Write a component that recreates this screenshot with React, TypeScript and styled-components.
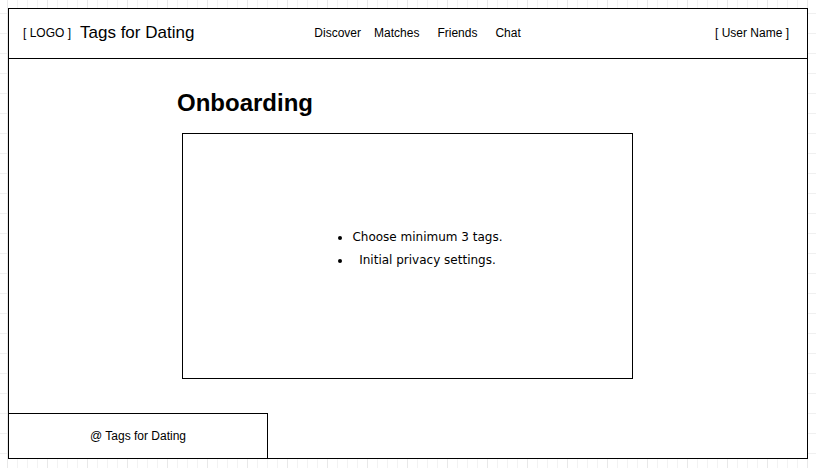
import React from "react";
import styled, { createGlobalStyle } from "styled-components";

const GlobalStyle = createGlobalStyle`
  html {
    background-color: #ffffff;
    background-image:
      linear-gradient(to right, #e9e9e9 1px, transparent 1px),
      linear-gradient(to right, #f3f3f3 1px, transparent 1px),
      linear-gradient(to bottom, #f0f0f0 1px, transparent 1px);
    background-size: 40px 100%, 10px 100%, 100% 20px;
    background-position: 7px 0, 7px 0, 0 13px;
    min-height: 100%;
  }
  body {
    margin: 8px;
    font-family: "Liberation Sans", Arial, sans-serif;
    color: #000;
  }
`;

const Frame = styled.div`
  box-sizing: border-box;
  width: 800px;
  height: 451px;
  border: 1px solid #000;
  background: #fff;
  display: flex;
  flex-direction: column;
`;

const Header = styled.header`
  box-sizing: border-box;
  height: 50px;
  flex: none;
  border-bottom: 1px solid #000;
  display: flex;
  align-items: center;
  padding: 0 18px 2px 14px;
  font-size: 12px;
`;

const Logo = styled.span`
  font-size: 12px;
  white-space: pre;
`;

const Brand = styled.span`
  font-size: 17px;
  margin-left: 9px;
`;

const Nav = styled.nav`
  display: flex;
  margin-left: 120px;
`;

const NavLink = styled.a<{ $gap: number }>`
  font-size: 12px;
  color: #000;
  text-decoration: none;
  margin-right: ${(p) => p.$gap}px;
`;

const User = styled.span`
  margin-left: auto;
  font-size: 12px;
  white-space: pre;
`;

const Main = styled.main`
  flex: 1;
  display: flex;
  flex-direction: column;
  align-items: flex-start;
  padding: 32px 0 0 168px;
`;

const Title = styled.h1`
  margin: 0;
  font-size: 24px;
  line-height: 24px;
  font-weight: bold;
`;

const Card = styled.section`
  box-sizing: border-box;
  margin: 18px 0 0 5px;
  width: 451px;
  height: 246px;
  border: 1px solid #000;
  display: flex;
  align-items: center;
  justify-content: center;
  padding-bottom: 14px;
`;

const List = styled.ul`
  display: inline-block;
  margin: 0;
  padding-left: 40px;
  font-family: "DejaVu Sans", Verdana, sans-serif;
  font-size: 12px;
  line-height: 23px;
`;

const Item = styled.li`
  text-align: center;
`;

const Footer = styled.footer`
  box-sizing: border-box;
  flex: none;
  width: 259px;
  height: 45px;
  border-top: 1px solid #000;
  border-right: 1px solid #000;
  display: flex;
  align-items: center;
  justify-content: center;
  font-size: 12px;
`;

const navItems: { label: string; gap: number }[] = [
  { label: "Discover", gap: 13 },
  { label: "Matches", gap: 18 },
  { label: "Friends", gap: 18 },
  { label: "Chat", gap: 0 },
];

export default function App() {
  return (
    <>
      <GlobalStyle />
      <Frame>
        <Header>
          <Logo>[ LOGO ]</Logo>
          <Brand>Tags for Dating</Brand>
          <Nav>
            {navItems.map((n) => (
              <NavLink key={n.label} $gap={n.gap}>
                {n.label}
              </NavLink>
            ))}
          </Nav>
          <User>[ User Name ]</User>
        </Header>
        <Main>
          <Title>Onboarding</Title>
          <Card>
            <List>
              <Item>Choose minimum 3 tags.</Item>
              <Item>Initial privacy settings.</Item>
            </List>
          </Card>
        </Main>
        <Footer>@ Tags for Dating</Footer>
      </Frame>
    </>
  );
}
